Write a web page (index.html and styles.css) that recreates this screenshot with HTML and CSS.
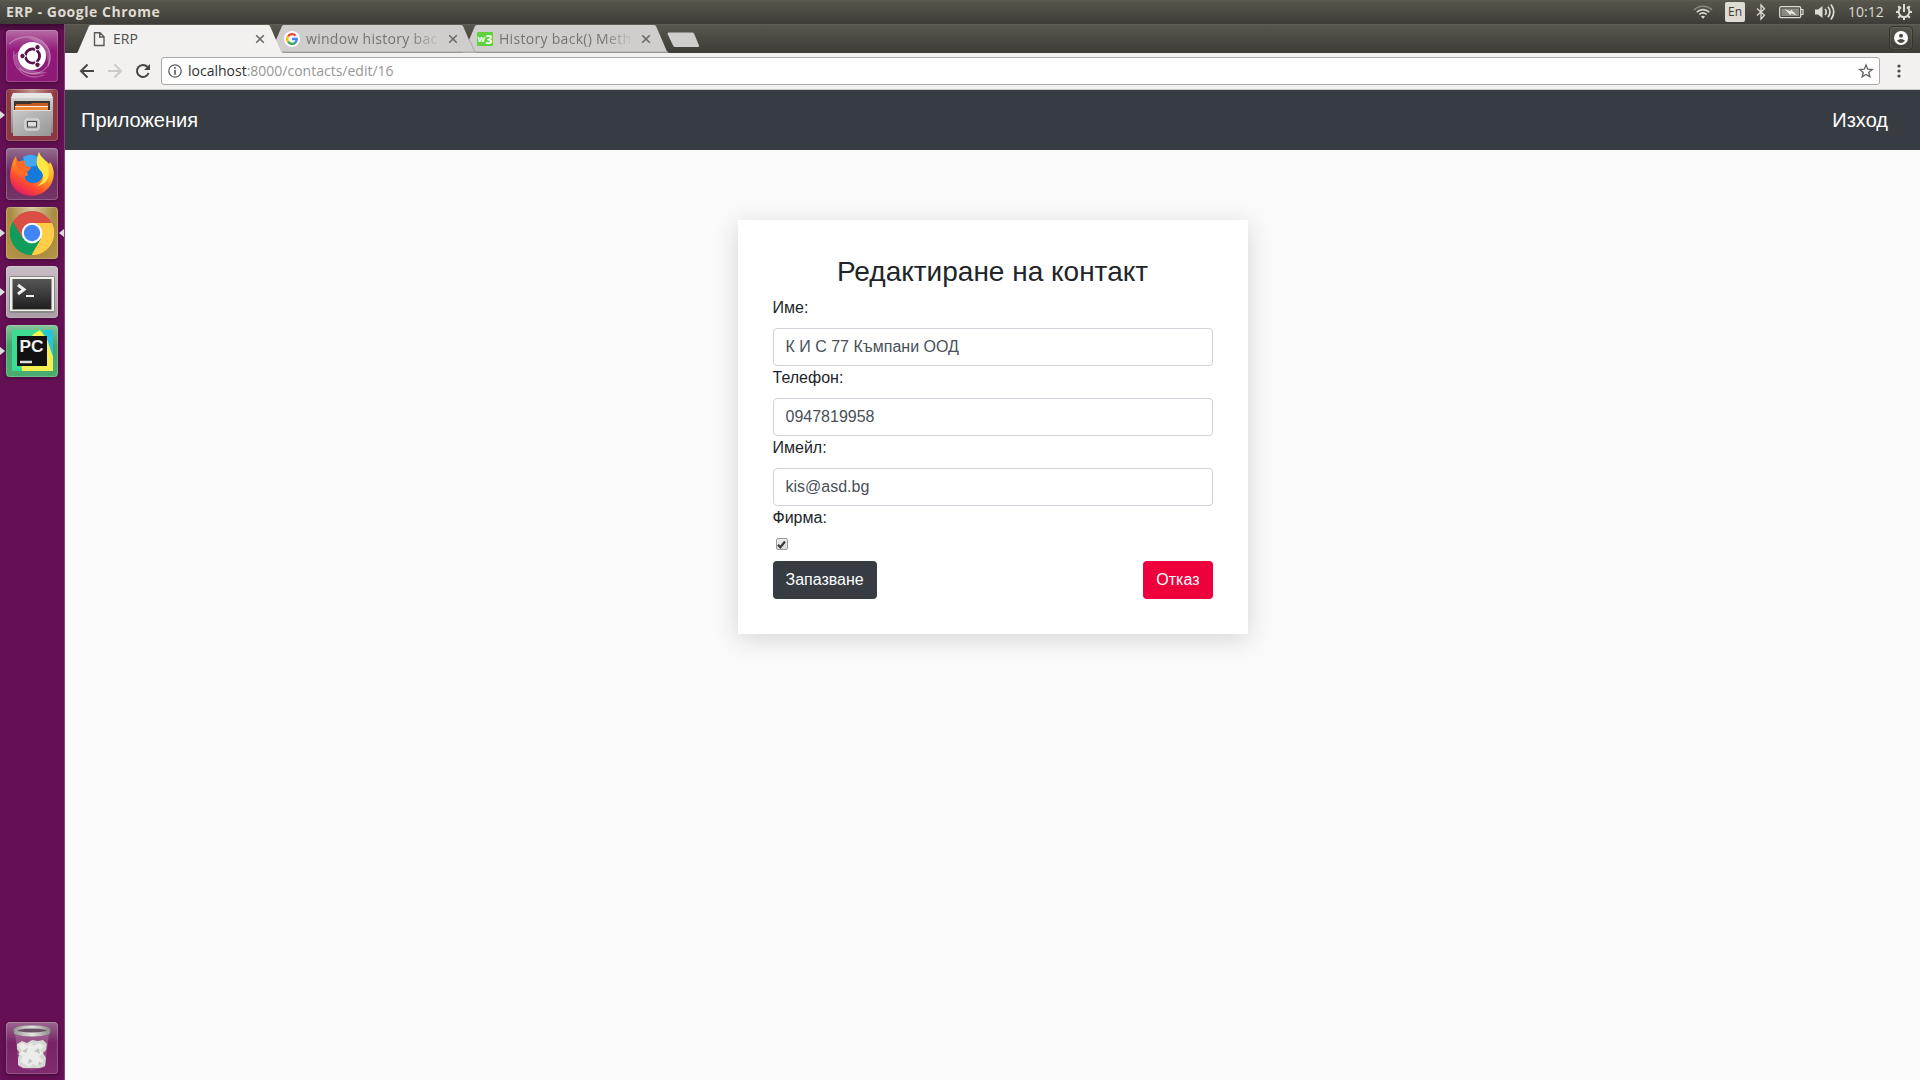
FILE: index.html
```html
<!DOCTYPE html>
<html lang="bg">
<head>
<meta charset="utf-8">
<title>ERP</title>
<link rel="stylesheet" href="styles.css">
</head>
<body>
<header class="panel">
  <span class="panel-title">ERP - Google Chrome</span>
  <div class="indicators">
    <svg class="ind-wifi" width="20" height="14" viewBox="0 0 20 14" fill="none" stroke-width="1.6"><path d="M1 4.8C6 0 14 0 19 4.8" stroke="#8b8981"/><path d="M3.8 7.2C7.5 3.8 12.500 3.800 16.200 7.200M6.300 9.500C8.500 7.600 11.500 7.600 13.700 9.500" stroke="#dfdbd2"/><path d="M8 11.500Q10 10 12 11.500L10 13.700z" fill="#dfdbd2"/></svg>
    <span class="lang">En</span>
    <svg class="ind-bt" width="10" height="18" viewBox="0 0 10 18" fill="none" stroke="#dfdbd2" stroke-width="1.300"><path d="M1 5.500L8.500 12.300L5 16V2L8.500 5.700L1 12.500"/></svg>
    <svg class="ind-bat" width="25" height="14" viewBox="0 0 25 14"><rect x=".7" y="1.700" width="21" height="11" rx="1.500" fill="none" stroke="#dfdbd2" stroke-width="1.300"/><path d="M22 4.500h2v5h-2" fill="none" stroke="#dfdbd2" stroke-width="1.200"/><path d="M2.500 3.500h17.500v7.500h-17.500z" fill="#8b8981"/><path d="M5.500 4l6 2.500.5-2 6 6-6-2.300-.5 2z" fill="#eeeae2"/></svg>
    <svg class="ind-vol" width="20" height="18" viewBox="0 0 20 18" fill="none" stroke="#dfdbd2" stroke-width="1.700"><path d="M0 6.500h3L7.500 3v12L3 11.500H0z" fill="#dfdbd2" stroke="none"/><path d="M10 6Q12.500 9 10 12M13 3.800Q17 9 13 14.200M16 1.500Q21.500 9 16 16.500"/></svg>
    <span class="clock">10:12</span>
    <svg class="ind-gear" width="18" height="18" viewBox="0 0 18 18" fill="none" stroke="#dfdbd2"><path d="M6 4.200a5.400 5.400 0 1 0 6 0" stroke-width="2"/><path d="M9 1v8" stroke-width="2"/><path d="M1 9h2.500M14.500 9H17M3.200 3.200l2 2M14.800 3.200l-2 2M3.200 14.800l2-2M14.800 14.800l-2-2M9 14v3" stroke-width="2"/></svg>
  </div>
</header>
<div class="desktop">
  <nav class="launcher">
    <div class="tile tile-dash"><svg width="52" height="52" viewBox="0 0 52 52"><g fill="none" stroke="#fff" stroke-width="1.300" opacity=".3"><path d="M3 14C19 0 44 8 44 27C44 43 25 49 13 38M8 21C5 38 20 52 38 45"/></g><path d="M20 8C43 7 49 25 42 38C43 23 36 12 20 8zM8 25C9 43 26 49 42 42C26 43 14 37 12 22z" fill="#fff" opacity=".23"/><circle cx="26" cy="26" r="14" fill="#fff"/><circle cx="26.500" cy="26" r="7" fill="none" stroke="#5b124d" stroke-width="3"/><path d="M26.500 26L13 26M26.500 26L33 14M26.500 26L33 38" stroke="#fff" stroke-width="1.200"/><circle cx="26.500" cy="26" r="5.500" fill="#fff"/><g fill="#5b124d" stroke="#fff"><circle cx="16.500" cy="26" r="2.700"/><circle cx="31.500" cy="17.200" r="2.700"/><circle cx="31.500" cy="34.800" r="2.700"/></g></svg></div>
    <div class="tile tile-files run"><svg width="52" height="52" viewBox="0 0 52 52"><defs><linearGradient id="fg" x2="0" y2="1"><stop stop-color="#dadada"/><stop offset="1" stop-color="#858585"/></linearGradient><linearGradient id="fg2" x2="1" y2="1"><stop stop-color="#c9c9c9"/><stop offset="1" stop-color="#969696"/></linearGradient></defs><path d="M7 4h38l2 6v34H5V10z" fill="url(#fg)"/><path d="M7 4h38l2 5H5z" fill="#e6e6e6"/><path d="M8 12h36v11H8z" fill="#3a3533"/><path d="M10 15h15l1-1h16v9H10z" fill="#c75c24"/><path d="M9 17h33v6H9z" fill="#fff1df"/><path d="M9 18h33v3H9z" fill="#f08b37"/><path d="M7 21h38v26H7z" fill="url(#fg2)"/><path d="M7 21.500h38" stroke="#ddd"/><rect x="19" y="30" width="14" height="11" rx="2" fill="#bdbdbd" stroke="#e5e5e5"/><rect x="21.500" y="32.500" width="9" height="5.500" fill="#ddd" stroke="#444"/></svg></div>
    <div class="tile tile-firefox"><svg width="52" height="52" viewBox="0 0 52 52"><defs><linearGradient id="ff" x1=".8" y1="0" x2=".2" y2="1"><stop stop-color="#fff14a"/><stop offset=".4" stop-color="#ffa51f"/><stop offset=".7" stop-color="#ff4c30"/><stop offset="1" stop-color="#dc146b"/></linearGradient></defs><circle cx="27" cy="24" r="17" fill="#1479dd"/><path d="M17 9C24 5 31 7 34 12L30 18 20 19z" fill="#42a5f5"/><path d="M10 8C10 11 11 13 13 14C16 12 19 13 19 13C18 17 20 19 25 19C24 22 21 23 21 24L22 28C18 27 18 30 21 33C27 38 37 34 37 26L35 22C31 20 29 14 33 5C35 10 39 11 43 16L44 14C51 24 48 37 38 44C27 51 12 48 6 37C2 29 5 15 10 8z" fill="url(#ff)"/><path d="M33 4C34 10 43 13 43 25C43 33 37 37 31 38C38 34 39 28 35 23C31 20 29 13 33 4z" fill="#ffe743"/><path d="M10 8C10 11 11 13 13 14C16 12 19 13 19 13C18 17 20 19 25 19C24 22 21 23 19 26C13 25 8 18 10 8z" fill="#ff6a2b"/></svg></div>
    <div class="tile tile-chrome run focus"><svg width="52" height="52" viewBox="0 0 52 52"><path d="M26 26L6.950 15A22 22 0 0 1 45.050 15z" fill="#d94f43"/><path d="M26 26L45 15A22 22 0 0 1 26 48z" fill="#ffcd46"/><path d="M26 48A22 22 0 0 1 6.950 15L26 36z" fill="#109d5b"/><path d="M26 16h19.700A22 22 0 0 1 25.500 48L35.500 30z" fill="#ffcd46"/><path d="M7 15L16.500 31.500 26 36l9-4.500L25.500 48A22 22 0 0 1 7 15z" fill="#109d5b"/><path d="M7 15A22 22 0 0 1 45.500 16H26L16.500 31z" fill="#d94f43"/><circle cx="26" cy="26" r="10.300" fill="#fff"/><circle cx="26" cy="26" r="8.200" fill="#4285f4"/></svg></div>
    <div class="tile tile-term run"><svg width="52" height="52" viewBox="0 0 52 52"><defs><linearGradient id="tg" x2="0" y2="1"><stop stop-color="#565656"/><stop offset="1" stop-color="#202020"/></linearGradient></defs><rect x="3" y="10" width="46" height="37" rx="2" fill="#8a8a86"/><path d="M4 11h44v34H4z" fill="#f0f0ed"/><path d="M6 13h40v31H6z" fill="#9a9a96"/><path d="M7 13h38v30H7z" fill="url(#tg)"/><path d="M12 19l6 4.500-6 4.500" fill="none" stroke="#eee" stroke-width="3"/><path d="M20 30h8" stroke="#eee" stroke-width="2"/></svg></div>
    <div class="tile tile-pc run"><svg width="52" height="52" viewBox="0 0 52 52"><path d="M6 5h34l7 6v35H6z" fill="#30d894"/><path d="M38 5h9v27L40 19z" fill="#26c5df"/><path d="M13 17L34 5l7 9 6 18v14H16z" fill="#f6ef52"/><path d="M6 5h26L20 16l-7 28-7 2z" fill="#3edb92"/><path d="M11 11h30v30H11z" fill="#111"/><path d="M14 37h12" stroke="#ddd" stroke-width="2.500"/><text x="13.500" y="27" class="pc-text" textLength="24" lengthAdjust="spacingAndGlyphs">PC</text></svg></div>
    <div class="tile tile-trash"><svg width="52" height="52" viewBox="0 0 52 52"><defs><linearGradient id="rim" x2="1"><stop stop-color="#999"/><stop offset=".5" stop-color="#e5e5e1"/><stop offset="1" stop-color="#8f8f8b"/></linearGradient></defs><path d="M9 11L13 45Q26 50 39 45L43 11z" fill="#ccb0c4" opacity=".3"/><path d="M11 22l5-3 5 2 5-3 6 1 5-1 4 4-1 6-3 3 3 5-1 8-5 2H17l-5-3v-7l2-5-3-4z" fill="#d6d8d3"/><path d="M13 23l4-2 4 3 3-3 4 3 5-3 5 3-4 5 3 2-4 4 4 4-5 5-5-2-4 3-5-3-4-3 3-5-5-2 4-3z" fill="#ecedea"/><path d="M16 29l6-3-2 5zM28 29l5-3 1 6zM23 37l4 2-5 3zM33 39l3 3-4 1z" fill="#c1c4be"/><ellipse cx="26" cy="8.500" rx="17" ry="3.500" fill="#665267" stroke="url(#rim)" stroke-width="3"/><path d="M8 9v3Q26 17 44 12V9Q26 15 8 9z" fill="url(#rim)"/></svg></div>
  </nav>
  <div class="browser">
    <div class="tabs">
      <div class="tab active"><svg class="shape" width="206" height="29" viewBox="0 0 206 29"><path d="M0 29L1 27.500L12 2Q13 1 14 1H191Q192 1 193 2L204 27.500L206 29z" fill="#f2f1f0"/></svg>
        <svg class="fav" width="16" height="16" viewBox="0 0 16 16" fill="none" stroke="#5a5a5a" stroke-width="1.400"><path d="M3.500 1.700h5.500l4 4v8.800H3.500zM8.700 1.700V6H13"/></svg>
        <span class="tab-text t1">ERP</span><svg class="close" width="10" height="10" viewBox="0 0 10 10"><path d="M1.200 1.200l7.600 7.600M8.800 1.200L1.200 8.800"/></svg></div>
      <div class="tab second"><svg class="shape" width="206" height="29" viewBox="0 0 206 29"><path d="M0 28.500L1 27.500L12 2Q13 1 14 1H191Q192 1 193 2L204 27.500L206 28.500z" fill="#d0cecc"/><path d="M199 15L205 28H0" fill="none" stroke="#aaa8a6"/></svg>
        <svg class="fav" width="16" height="16" viewBox="0 0 16 16"><circle cx="8" cy="8" r="8" fill="#fff"/><g fill="none" stroke-width="2.300"><path d="M4 5.300A4.800 4.800 0 0 1 11.500 4.600" stroke="#e94235"/><path d="M4 5.300a4.800 4.800 0 0 0 0 5.400" stroke="#fbbc05"/><path d="M4 10.700a4.800 4.800 0 0 0 7.300.9" stroke="#34a853"/><path d="M8 8h4.800a4.800 4.800 0 0 1-1.700 3.700" stroke="#4285f4"/></g></svg>
        <span class="tab-text t2">window history bac</span><svg class="close" width="10" height="10" viewBox="0 0 10 10"><path d="M1.200 1.200l7.600 7.600M8.800 1.200L1.200 8.800"/></svg></div>
      <div class="tab third"><svg class="shape" width="206" height="29" viewBox="0 0 206 29"><path d="M0 28.500L1 27.500L12 2Q13 1 14 1H191Q192 1 193 2L204 27.500L206 28.500z" fill="#d0cecc"/><path d="M0 28H205" stroke="#aaa8a6"/></svg>
        <svg class="fav" width="16" height="16" viewBox="0 0 16 16"><rect y="1" width="16" height="14" rx="1" fill="#5fd13a"/><text x=".5" y="10.500" class="w-text">w</text><text x="8.500" y="13" class="three-text">3</text></svg>
        <span class="tab-text t3">History back() Meth</span><svg class="close" width="10" height="10" viewBox="0 0 10 10"><path d="M1.200 1.200l7.600 7.600M8.800 1.200L1.200 8.800"/></svg></div>
      <svg class="newtab" width="33" height="16" viewBox="0 0 33 16"><path d="M1.500.5H25Q26.500.5 27 1.500L32 13.500Q32.300 15 31 15H8Q7 15 6.300 14L.6 2Q.3.500 1.500.5z" fill="#d0cecc"/></svg>
      <span class="profile"><svg width="14" height="14" viewBox="0 0 14 14"><circle cx="7" cy="7" r="7" fill="#fff"/><circle cx="7" cy="4.700" r="2" fill="#4a4942"/><path d="M3 9.500Q7 6.500 11 9.500Q9 12 7 12T3 9.500z" fill="#4a4942"/></svg></span>
    </div>
    <div class="toolbar">
      <svg class="nav-icon" width="16" height="16" viewBox="0 0 16 16" fill="none" stroke="#454545" stroke-width="2"><path d="M15 8H2.500M8.500 1.500L2 8l6.500 6.500"/></svg>
      <svg class="nav-icon" width="16" height="16" viewBox="0 0 16 16" fill="none" stroke="#cdcbca" stroke-width="2"><path d="M1 8h12.500M7.500 1.500L14 8l-6.500 6.500"/></svg>
      <svg class="nav-icon reload" width="16" height="16" viewBox="0 0 16 16" fill="none" stroke="#454545" stroke-width="2"><path d="M13.600 10A6 6 0 1 1 12.500 4"/><path d="M15 1v6H9z" fill="#454545" stroke="none"/></svg>
      <div class="omnibox">
        <svg width="14" height="14" viewBox="0 0 14 14" fill="none" stroke="#5f5f5f"><circle cx="7" cy="7" r="6.200" stroke-width="1.300"/><path d="M7 3v1.800M7 6v4.700" stroke-width="1.700"/></svg>
        <span class="url"><b>localhost</b>:8000/contacts/edit/16</span>
        <svg class="star" width="16" height="16" viewBox="0 0 16 16" fill="none" stroke="#616161" stroke-width="1.300"><path d="M8 2l1.700 4.200 4.500.3-3.500 2.900 1.200 4.500L8 11.400l-3.900 2.500 1.200-4.500-3.500-2.900 4.500-.3z"/></svg>
      </div>
      <svg class="menu" width="4" height="14" viewBox="0 0 4 14" fill="#4b4b4b"><circle cx="2" cy="2" r="1.600"/><circle cx="2" cy="7" r="1.600"/><circle cx="2" cy="12" r="1.600"/></svg>
    </div>
    <main class="page">
      <div class="navbar"><a>Приложения</a><a>Изход</a></div>
      <form class="card">
        <h1>Редактиране на контакт</h1>
        <label>Име:</label><input class="field" value="К И С 77 Къмпани ООД">
        <label>Телефон:</label><input class="field" value="0947819958">
        <label>Имейл:</label><input class="field" value="kis@asd.bg">
        <label>Фирма:</label>
        <div class="check-row"><span class="check"><svg width="11" height="11" viewBox="0 0 11 11"><path d="M2 5.700l2.400 2.600L9 2.500" fill="none" stroke="#3c3c3c" stroke-width="2.200"/></svg></span></div>
        <div class="actions"><button type="button" class="btn">Запазване</button><button type="button" class="btn danger">Отказ</button></div>
      </form>
    </main>
  </div>
</div>
</body>
</html>
```
FILE: styles.css
```css
* { box-sizing: border-box; }
body { margin: 0; width: 1920px; height: 1080px; overflow: hidden; font-family: "Liberation Sans", Arial, sans-serif; display: flex; flex-direction: column; }
svg { display: block; flex: none; }
.panel { height: 24px; flex: none; display: flex; align-items: center; justify-content: space-between; padding: 0 7px 0 6px; background: linear-gradient(#5f5d50 0, #56544a 2px, #3d3c37 100%); color: #dfdbd2; font-family: "Open Sans", "Noto Sans", sans-serif; }
.panel-title { font-size: 14px; font-weight: 700; line-height: 24px; letter-spacing: .52px; white-space: nowrap; }
.indicators { display: flex; align-items: center; height: 24px; }
.lang { width: 20px; height: 20px; margin: 0 11px 0 12px; border-radius: 2px; background: #dfdbd2; color: #3c3b37; font-size: 12px; line-height: 20px; text-align: center; }
.ind-bat { margin-left: 13px; }
.ind-vol { margin-left: 11px; }
.clock { font-size: 14px; line-height: 24px; width: 35px; margin: 0 12px 0 13px; white-space: nowrap; }
.desktop { flex: 1; display: flex; min-height: 0; }
.launcher { width: 65px; flex: none; padding: 6px 0 6px 6px; display: flex; flex-direction: column; gap: 7px; background: linear-gradient(#3b0a31 0, #651054 8px, #651054 100%); border-right: 1px solid #86467a; }
.tile { position: relative; width: 52px; height: 52px; border-radius: 4px; box-shadow: inset 0 0 0 1px rgba(255,255,255,.2), 0 1px 4px rgba(0,0,0,.4); }
.tile-dash { background: linear-gradient(#b66ca4, #92187a 40%, #8d1a76); }
.tile-files { background: radial-gradient(ellipse at 50% 0, #c59992, #8c3742 65%); }
.tile-firefox { background: linear-gradient(#967090, #6c285f 45%, #763569); }
.tile-chrome { background: radial-gradient(ellipse at 50% 0, #d8caa0, #aa8b42 60%, #b59544); }
.tile-term { background: linear-gradient(#c8bdc5, #aa9da8); }
.tile-pc { background: linear-gradient(#83c59a, #43a66b 40%, #4bad70); }
.tile-trash { margin-top: auto; background: linear-gradient(#9a6790, #792367 40%, #802a70); }
.run::before, .focus::after { content: ""; position: absolute; top: 22px; border: 4px solid transparent; }
.run::before { left: -6px; border-left: 5px solid #ddd; border-right: 0; }
.focus::after { right: -6px; border-right: 5px solid #ddd; border-left: 0; }
.pc-text { font: 700 17px "Liberation Sans", sans-serif; fill: #eee; }
.browser { flex: 1; display: flex; flex-direction: column; min-width: 0; }
.tabs { height: 29px; flex: none; display: flex; padding-left: 12px; background: linear-gradient(#65635a 0, #58564c 1px, #3d3c37 100%); font-family: "Open Sans", "Noto Sans", sans-serif; }
.tab { position: relative; width: 205px; height: 29px; padding: 0 17px 0 16px; margin-right: -12px; display: flex; align-items: center; }
.tab > * { position: relative; }
.tab .shape { position: absolute; left: 0; top: 0; }
.active { z-index: 3; }
.second { z-index: 2; }
.third { z-index: 1; }
.fav { width: 16px; margin-left: -2px; }
.second .fav, .third .fav { margin-left: -2px; }
.tab-text { flex: 1; margin-left: 6px; white-space: nowrap; font-size: 14px; line-height: 28px; color: #4c4c4c; }
.second .tab-text, .third .tab-text { color: #757371; letter-spacing: .3px; -webkit-mask-image: linear-gradient(90deg, #000 104px, transparent 135px); mask-image: linear-gradient(90deg, #000 104px, transparent 135px); }
.close { margin-left: 8px; fill: none; stroke: #6a6968; stroke-width: 1.600; }
.newtab { margin: 8px 0 0 11px; }
.profile { margin: 2px 7px 0 auto; width: 24px; height: 24px; display: flex; align-items: center; justify-content: center; border: 1px solid #35342f; border-radius: 4px; box-shadow: inset 0 0 0 1px rgba(255,255,255,.08); }
.toolbar { height: 37px; flex: none; display: flex; align-items: center; padding: 0 19px 0 14px; background: #f2f1f0; border-bottom: 1px solid #c5c8c9; }
.nav-icon { margin-right: 12px; }
.reload { margin-right: 10px; }
.omnibox { flex: 1; height: 28px; display: flex; align-items: center; padding: 0 5px 0 6px; background: #fff; border: 1px solid #aaa8a6; border-radius: 3px; font-family: "Open Sans", "Noto Sans", sans-serif; }
.url { margin-left: 6px; font-size: 14px; line-height: 26px; color: #969696; white-space: nowrap; }
.url b { font-weight: 400; color: #303030; }
.star { margin-left: auto; }
.menu { margin-left: 17px; }
.page { flex: 1; background: #fafafa; }
.navbar { height: 60px; padding: 0 32px 0 16px; display: flex; align-items: center; justify-content: space-between; background: #373b42; color: #fff; font-size: 20px; line-height: 30px; }
.card { width: 510px; height: 414px; margin: 70px auto 0 672.5px; padding: 35px; background: #fff; box-shadow: 0 5px 24px rgba(0,0,0,.15); color: #212529; font-size: 16px; line-height: 24px; }
.card h1 { margin: 0 0 8px; font-size: 28px; font-weight: 400; line-height: 33px; text-align: center; }
.card label { display: block; margin-bottom: 8px; }
.field { display: block; width: 100%; height: 38px; padding: 6px 12px; border: 1px solid #ced4da; border-radius: 4px; background: #fff; color: #495057; font: 16px/24px "Liberation Sans", Arial, sans-serif; }
.check-row { height: 23px; padding-left: 3px; }
.check { width: 12px; height: 12px; display: flex; align-items: center; justify-content: center; border: 1px solid #999; border-radius: 2px; background: linear-gradient(#eee, #dcdcdc); }
.actions { display: flex; justify-content: space-between; }
.btn { height: 38px; padding: 6px 13px; border: 0; border-radius: 4px; background: #373b42; color: #fff; font: 16px/24px "Liberation Sans", Arial, sans-serif; }
.danger { background: #ed003c; }
.w-text { font: 700 9px "Open Sans", sans-serif; fill: #fff; }
.three-text { font: 700 12px "Open Sans", sans-serif; fill: #fff; }
```
